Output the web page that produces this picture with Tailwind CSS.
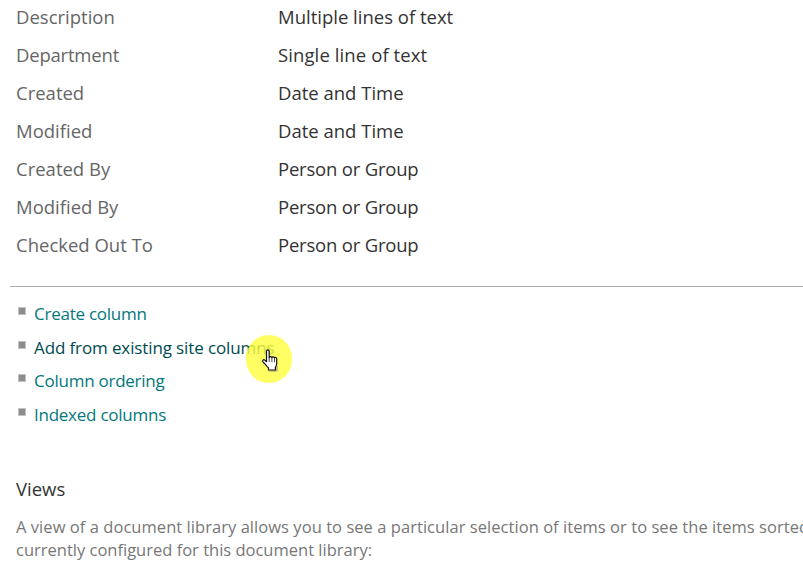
<!DOCTYPE html>
<html><head><script src="https://cdn.jsdelivr.net/npm/@tailwindcss/browser@4"></script></head>
<body class="bg-white overflow-hidden">
<div class="relative w-[803px] h-[566px] overflow-hidden font-['Open_Sans',sans-serif] text-[18.5px]">
  <div class="pl-4 flex flex-col">
    <div class="grid grid-cols-[262px_1fr] h-[38px] items-center -mt-[2px]"><span class="text-[#666666]">Description</span><span class="text-[#333333]">Multiple lines of text</span></div>
    <div class="grid grid-cols-[262px_1fr] h-[38px] items-center"><span class="text-[#666666] tracking-[-0.2px]">Department</span><span class="text-[#333333] tracking-[0.1px]">Single line of text</span></div>
    <div class="grid grid-cols-[262px_1fr] h-[38px] items-center"><span class="text-[#666666]">Created</span><span class="text-[#333333]">Date and Time</span></div>
    <div class="grid grid-cols-[262px_1fr] h-[38px] items-center"><span class="text-[#666666]">Modified</span><span class="text-[#333333]">Date and Time</span></div>
    <div class="grid grid-cols-[262px_1fr] h-[38px] items-center"><span class="text-[#666666]">Created By</span><span class="text-[#333333] tracking-[-0.2px]">Person or Group</span></div>
    <div class="grid grid-cols-[262px_1fr] h-[38px] items-center"><span class="text-[#666666]">Modified By</span><span class="text-[#333333] tracking-[-0.2px]">Person or Group</span></div>
    <div class="grid grid-cols-[262px_1fr] h-[38px] items-center"><span class="text-[#666666]">Checked Out To</span><span class="text-[#333333] tracking-[-0.2px]">Person or Group</span></div>
  </div>
  <div class="ml-[10px] mt-[22px] h-px bg-[#ababab]"></div>
  <ul class="mt-[10px] pl-[18px] flex flex-col text-[17px] tracking-[-0.25px]">
    <li class="flex h-[33.6px] items-center gap-[8px]"><span class="w-[8px] h-[8px] -mt-[5px] bg-[#8c8c8c] border border-[#c2c2c2]"></span><span class="text-[#03787c]">Create column</span></li>
    <li class="flex h-[33.6px] items-center gap-[8px]"><span class="w-[8px] h-[8px] -mt-[5px] bg-[#8c8c8c] border border-[#c2c2c2]"></span><span class="text-[#004b50] tracking-[-0.12px]">Add from existing site columns</span></li>
    <li class="flex h-[33.6px] items-center gap-[8px]"><span class="w-[8px] h-[8px] -mt-[5px] bg-[#8c8c8c] border border-[#c2c2c2]"></span><span class="text-[#03787c]">Column ordering</span></li>
    <li class="flex h-[33.6px] items-center gap-[8px]"><span class="w-[8px] h-[8px] -mt-[5px] bg-[#8c8c8c] border border-[#c2c2c2]"></span><span class="text-[#03787c]">Indexed columns</span></li>
  </ul>
  <div class="pl-4 mt-[46px] text-[#333333] leading-[24px]">Views</div>
  <p class="pl-4 mt-[14px] w-[900px] text-[#777777] text-[16.5px] leading-[23px] whitespace-nowrap"><span class="tracking-[0.05px]">A view of a document library allows you to see a particular selection of items or to see the items sorted in a particular order.</span><br>currently configured for this document library:</p>
  <div class="absolute left-[246px] top-[335px] w-[46px] h-[48px] rounded-full bg-[#ffff3c]/80"></div>
  <svg class="absolute left-[261px] top-[349px]" width="19" height="24" viewBox="0 0 19 24"><path d="M7 23h8l2-1v-5z" fill="#888" opacity=".5"/><path d="M5.500 2c0-1.600 2.700-1.600 2.700 0v6.500c.3-1.200 2.500-1.200 2.700.2.300-1.100 2.400-1 2.600.3.400-.9 2.200-.7 2.200.7v4.800c0 1.600-.8 2.800-1.300 4V21H7.500v-2C6 17.200 4 15 2 12.800c-1-1.300.5-2.700 1.700-1.700l1.800 1.600z" fill="#fff" stroke="#111" stroke-width="1.200" stroke-linejoin="round"/><path d="M8.200 8v5M10.900 8.700v4.500M13.500 9v4.200" stroke="#333" stroke-width=".9"/></svg>
</div>
</body></html>
